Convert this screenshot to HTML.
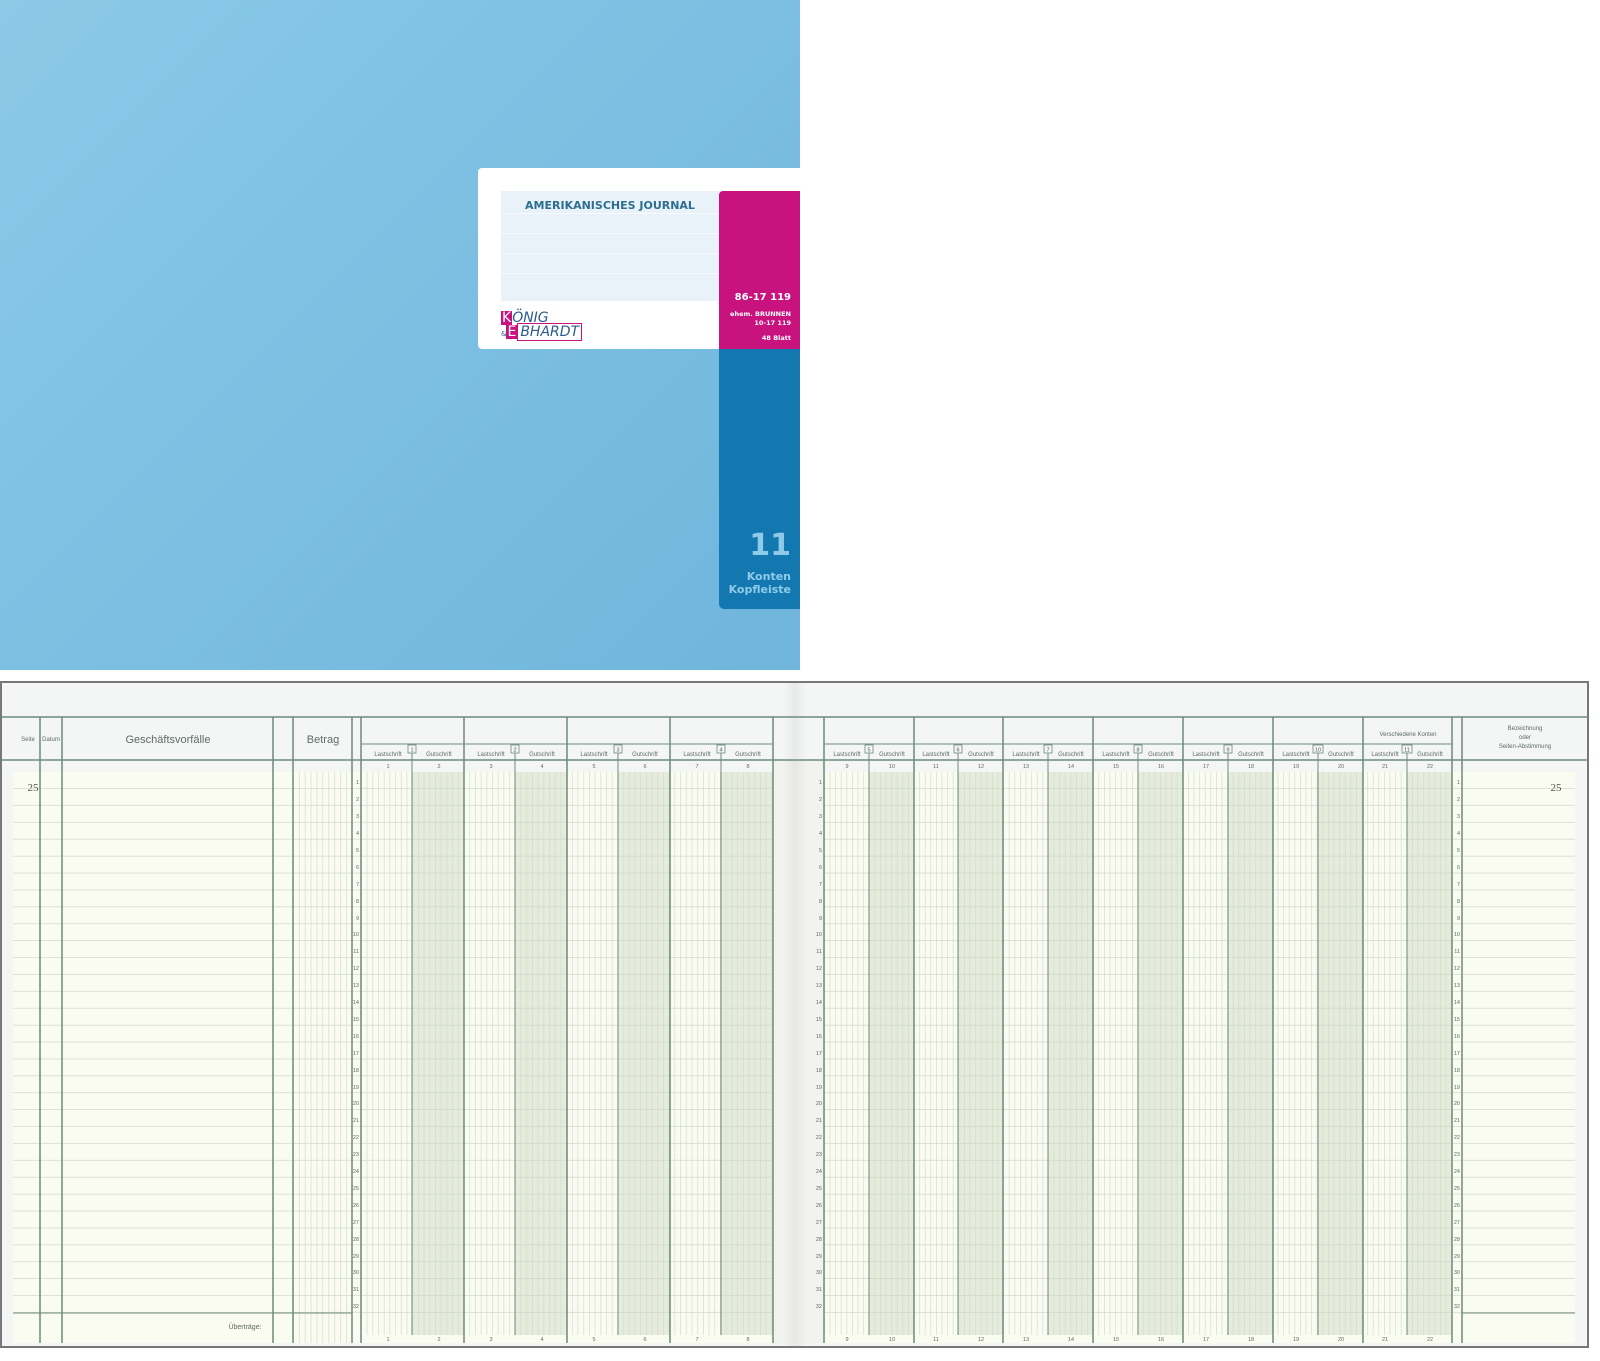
<!DOCTYPE html>
<html><head><meta charset="utf-8"><style>
html,body{margin:0;padding:0;background:#fff;width:1600px;height:1361px;overflow:hidden;position:relative;font-family:"Liberation Sans",sans-serif}
.cover{position:absolute;left:0;top:0;width:800px;height:670px;background:linear-gradient(135deg,#8cc9e7 0%,#7cbfe2 50%,#6fb5dc 100%)}
.lab{position:absolute;left:478px;top:168px;width:322px;height:181px;background:#fff;border-radius:4px 0 0 4px}
.lines{position:absolute;left:501px;top:191px;width:218px;height:110px;background:#e9f1f9}
.lines div{position:absolute;left:0;width:100%;height:1px;background:#f7fafd}
.title{position:absolute;left:501px;top:199px;width:218px;text-align:center;font:bold 11px "DejaVu Sans",sans-serif;color:#2c6f8f;letter-spacing:0}
.pink{position:absolute;left:719px;top:191px;width:81px;height:158px;background:#c8137f;border-radius:4px 0 0 0;color:#fff;text-align:right;font-family:"DejaVu Sans",sans-serif;font-weight:bold}
.dblue{position:absolute;left:719px;top:349px;width:81px;height:260px;background:#1378b0;border-radius:0 0 0 5px;color:#8fcbe9;text-align:right;font-family:"DejaVu Sans",sans-serif;font-weight:bold}
.logo{position:absolute;left:501px;top:311px;font:italic 14px "DejaVu Sans",sans-serif;color:#2c5c8f;line-height:14px}
.logo b{display:inline-block;background:#c8137f;color:#fff;font-style:normal;padding:0 1px;font-weight:normal}
</style></head><body>
<div class="cover"></div>
<div class="lab"></div>
<div class="lines"><div style="top:22px"></div><div style="top:42px"></div><div style="top:62px"></div><div style="top:82px"></div></div>
<div class="title">AMERIKANISCHES JOURNAL</div>
<div class="logo"><b>K</b>ÖNIG<br><span style="font-size:7px;font-style:normal">&amp;</span><b>E</b><span style="border:1px solid #c8137f;padding:0 2px">BHARDT</span></div>
<div class="pink">
<div style="position:absolute;right:9px;top:101px;font-size:10px">86-17 119</div>
<div style="position:absolute;right:9px;top:119px;font-size:6.5px;line-height:9px">ehem. BRUNNEN<br>10-17 119</div>
<div style="position:absolute;right:9px;top:143px;font-size:6.5px">48 Blatt</div>
</div>
<div class="dblue">
<div style="position:absolute;right:9px;top:182px;font-size:30px;line-height:30px">11</div>
<div style="position:absolute;right:9px;top:221px;font-size:11px;line-height:13px">Konten<br>Kopfleiste</div>
</div>

<svg width="1600" height="1361" style="position:absolute;left:0;top:0" xmlns="http://www.w3.org/2000/svg" font-family="Liberation Sans, sans-serif">
<defs>
<pattern id="rows" x="0" y="772" width="10" height="16.9" patternUnits="userSpaceOnUse"><rect x="0" y="16.2" width="10" height="0.9" fill="#cdd6cc"/></pattern>
<pattern id="vl" x="361" y="0" width="5.7" height="10" patternUnits="userSpaceOnUse"><rect x="0" y="0" width="0.7" height="10" fill="#d3dbd0"/></pattern>
<pattern id="vr" x="824" y="0" width="5.6" height="10" patternUnits="userSpaceOnUse"><rect x="0" y="0" width="0.7" height="10" fill="#d3dbd0"/></pattern>
<pattern id="vb" x="293" y="0" width="5.9" height="10" patternUnits="userSpaceOnUse"><rect x="0" y="0" width="0.7" height="10" fill="#d3dbd0"/></pattern>
<linearGradient id="fold" x1="0" x2="1"><stop offset="0" stop-color="#000" stop-opacity="0"/><stop offset=".5" stop-color="#000" stop-opacity=".05"/><stop offset="1" stop-color="#000" stop-opacity="0"/></linearGradient>
</defs>
<rect x="1" y="682" width="1587" height="665" fill="#f4f6f5"/>
<rect x="13" y="772" width="1562" height="571" fill="#fbfcf1"/>
<g fill="#e5ecdb">
<rect x="412" y="772" width="52" height="563"/><rect x="515" y="772" width="52" height="563"/><rect x="618" y="772" width="52" height="563"/><rect x="721" y="772" width="52" height="563"/>
<rect x="869" y="772" width="45" height="563"/><rect x="958" y="772" width="45" height="563"/><rect x="1048" y="772" width="45" height="563"/><rect x="1138" y="772" width="45" height="563"/><rect x="1228" y="772" width="45" height="563"/><rect x="1318" y="772" width="45" height="563"/><rect x="1407" y="772" width="45" height="563"/>
</g>
<rect x="293" y="772" width="59" height="571" fill="url(#vb)"/>
<rect x="361" y="772" width="412" height="563" fill="url(#vl)"/>
<rect x="824" y="772" width="628" height="563" fill="url(#vr)"/>
<rect x="773" y="760" width="51" height="583" fill="#f2f3ee"/>
<rect x="783" y="682" width="24" height="665" fill="url(#fold)"/>
<rect x="13" y="772" width="760" height="541" fill="url(#rows)"/>
<rect x="824" y="772" width="751" height="541" fill="url(#rows)"/>
<g stroke="#6e8a7c" fill="none">
<rect x="1" y="682" width="1587" height="665" stroke="#777" stroke-width="2"/>
<line x1="1" y1="717" x2="1588" y2="717" stroke-width="1.5"/>
<line x1="1" y1="760" x2="1588" y2="760" stroke-width="1.5"/>
<line x1="361" y1="744" x2="773" y2="744"/>
<line x1="824" y1="744" x2="1452" y2="744"/>
<g stroke-width="1.5">
<line x1="40" y1="717" x2="40" y2="1343"/><line x1="62" y1="717" x2="62" y2="1343"/>
<line x1="273" y1="717" x2="273" y2="1343"/><line x1="293" y1="717" x2="293" y2="1343"/>
<line x1="352" y1="717" x2="352" y2="1343"/><line x1="361" y1="717" x2="361" y2="1343"/>
<line x1="464" y1="717" x2="464" y2="1343"/><line x1="567" y1="717" x2="567" y2="1343"/><line x1="670" y1="717" x2="670" y2="1343"/><line x1="773" y1="717" x2="773" y2="1343"/>
<line x1="824" y1="717" x2="824" y2="1343"/><line x1="914" y1="717" x2="914" y2="1343"/><line x1="1003" y1="717" x2="1003" y2="1343"/><line x1="1093" y1="717" x2="1093" y2="1343"/><line x1="1183" y1="717" x2="1183" y2="1343"/><line x1="1273" y1="717" x2="1273" y2="1343"/><line x1="1363" y1="717" x2="1363" y2="1343"/><line x1="1452" y1="717" x2="1452" y2="1343"/><line x1="1462" y1="717" x2="1462" y2="1343"/>
</g>
<g stroke-width="1">
<line x1="412" y1="753" x2="412" y2="1335"/><line x1="515" y1="753" x2="515" y2="1335"/><line x1="618" y1="753" x2="618" y2="1335"/><line x1="721" y1="753" x2="721" y2="1335"/>
<line x1="869" y1="753" x2="869" y2="1335"/><line x1="958" y1="753" x2="958" y2="1335"/><line x1="1048" y1="753" x2="1048" y2="1335"/><line x1="1138" y1="753" x2="1138" y2="1335"/><line x1="1228" y1="753" x2="1228" y2="1335"/><line x1="1318" y1="753" x2="1318" y2="1335"/><line x1="1407" y1="753" x2="1407" y2="1335"/>
</g>
<line x1="13" y1="1313" x2="352" y2="1313"/>
<line x1="1462" y1="1313" x2="1575" y2="1313"/>
</g>
<g stroke="#6e8a7c" fill="#f4f6f5" stroke-width="0.8">
<rect x="408" y="745" width="8" height="8"/><rect x="511" y="745" width="8" height="8"/><rect x="614" y="745" width="8" height="8"/><rect x="717" y="745" width="8" height="8"/>
<rect x="865" y="745" width="8" height="8"/><rect x="954" y="745" width="8" height="8"/><rect x="1044" y="745" width="8" height="8"/><rect x="1134" y="745" width="8" height="8"/><rect x="1224" y="745" width="8" height="8"/><rect x="1313" y="745" width="10" height="8"/><rect x="1402" y="745" width="10" height="8"/>
</g>
<g font-size="5.5" fill="#556" text-anchor="middle">
<text x="412" y="751.5">1</text><text x="515" y="751.5">2</text><text x="618" y="751.5">3</text><text x="721" y="751.5">4</text>
<text x="869" y="751.5">5</text><text x="958" y="751.5">6</text><text x="1048" y="751.5">7</text><text x="1138" y="751.5">8</text><text x="1228" y="751.5">9</text><text x="1318" y="751.5">10</text><text x="1407" y="751.5">11</text>
</g>
<g fill="#5d6b66">
<text x="28" y="741" font-size="6" text-anchor="middle">Seite</text>
<text x="51" y="741" font-size="6" text-anchor="middle">Datum</text>
<text x="168" y="743" font-size="11" text-anchor="middle">Geschäftsvorfälle</text>
<text x="323" y="743" font-size="11" text-anchor="middle">Betrag</text>
<text x="1408" y="736" font-size="6" text-anchor="middle">Verschiedene Konten</text>
<text x="1525" y="730" font-size="6" text-anchor="middle">Bezeichnung</text>
<text x="1525" y="739" font-size="6" text-anchor="middle">oder</text>
<text x="1525" y="748" font-size="6" text-anchor="middle">Seiten-Abstimmung</text>
<text x="245" y="1329" font-size="7" text-anchor="middle">Überträge:</text>
</g>
<g fill="#5d6b66" font-size="6" text-anchor="middle">
<text x="388" y="756">Lastschrift</text><text x="439" y="756">Gutschrift</text>
<text x="491" y="756">Lastschrift</text><text x="542" y="756">Gutschrift</text>
<text x="594" y="756">Lastschrift</text><text x="645" y="756">Gutschrift</text>
<text x="697" y="756">Lastschrift</text><text x="748" y="756">Gutschrift</text>
<text x="847" y="756">Lastschrift</text><text x="892" y="756">Gutschrift</text>
<text x="936" y="756">Lastschrift</text><text x="981" y="756">Gutschrift</text>
<text x="1026" y="756">Lastschrift</text><text x="1071" y="756">Gutschrift</text>
<text x="1116" y="756">Lastschrift</text><text x="1161" y="756">Gutschrift</text>
<text x="1206" y="756">Lastschrift</text><text x="1251" y="756">Gutschrift</text>
<text x="1296" y="756">Lastschrift</text><text x="1341" y="756">Gutschrift</text>
<text x="1385" y="756">Lastschrift</text><text x="1430" y="756">Gutschrift</text>
</g>
<g fill="#5d6b66" font-size="5.5" text-anchor="middle">
<text x="388" y="768">1</text><text x="439" y="768">2</text><text x="491" y="768">3</text><text x="542" y="768">4</text><text x="594" y="768">5</text><text x="645" y="768">6</text><text x="697" y="768">7</text><text x="748" y="768">8</text>
<text x="847" y="768">9</text><text x="892" y="768">10</text><text x="936" y="768">11</text><text x="981" y="768">12</text><text x="1026" y="768">13</text><text x="1071" y="768">14</text><text x="1116" y="768">15</text><text x="1161" y="768">16</text><text x="1206" y="768">17</text><text x="1251" y="768">18</text><text x="1296" y="768">19</text><text x="1341" y="768">20</text><text x="1385" y="768">21</text><text x="1430" y="768">22</text>
</g>
<g fill="#5d6b66" font-size="5.5" text-anchor="middle">
<text x="388" y="1341">1</text><text x="439" y="1341">2</text><text x="491" y="1341">3</text><text x="542" y="1341">4</text><text x="594" y="1341">5</text><text x="645" y="1341">6</text><text x="697" y="1341">7</text><text x="748" y="1341">8</text>
<text x="847" y="1341">9</text><text x="892" y="1341">10</text><text x="936" y="1341">11</text><text x="981" y="1341">12</text><text x="1026" y="1341">13</text><text x="1071" y="1341">14</text><text x="1116" y="1341">15</text><text x="1161" y="1341">16</text><text x="1206" y="1341">17</text><text x="1251" y="1341">18</text><text x="1296" y="1341">19</text><text x="1341" y="1341">20</text><text x="1385" y="1341">21</text><text x="1430" y="1341">22</text>
</g>
<text x="33" y="791" font-family="Liberation Serif, serif" font-size="11" fill="#555" text-anchor="middle">25</text>
<text x="1556" y="791" font-family="Liberation Serif, serif" font-size="11" fill="#555" text-anchor="middle">25</text>
<g fill="#5d6b66" font-size="5.5" text-anchor="end" transform="translate(359,0)">
<text y="784">1</text><text y="801">2</text><text y="818">3</text><text y="835">4</text><text y="852">5</text><text y="869">6</text><text y="886">7</text><text y="903">8</text><text y="920">9</text><text y="936">10</text><text y="953">11</text><text y="970">12</text><text y="987">13</text><text y="1004">14</text><text y="1021">15</text><text y="1038">16</text><text y="1055">17</text><text y="1072">18</text><text y="1089">19</text><text y="1105">20</text><text y="1122">21</text><text y="1139">22</text><text y="1156">23</text><text y="1173">24</text><text y="1190">25</text><text y="1207">26</text><text y="1224">27</text><text y="1241">28</text><text y="1258">29</text><text y="1274">30</text><text y="1291">31</text><text y="1308">32</text>
</g>
<g fill="#5d6b66" font-size="5.5" text-anchor="end" transform="translate(822,0)">
<text y="784">1</text><text y="801">2</text><text y="818">3</text><text y="835">4</text><text y="852">5</text><text y="869">6</text><text y="886">7</text><text y="903">8</text><text y="920">9</text><text y="936">10</text><text y="953">11</text><text y="970">12</text><text y="987">13</text><text y="1004">14</text><text y="1021">15</text><text y="1038">16</text><text y="1055">17</text><text y="1072">18</text><text y="1089">19</text><text y="1105">20</text><text y="1122">21</text><text y="1139">22</text><text y="1156">23</text><text y="1173">24</text><text y="1190">25</text><text y="1207">26</text><text y="1224">27</text><text y="1241">28</text><text y="1258">29</text><text y="1274">30</text><text y="1291">31</text><text y="1308">32</text>
</g>
<g fill="#5d6b66" font-size="5.5" text-anchor="end" transform="translate(1460,0)">
<text y="784">1</text><text y="801">2</text><text y="818">3</text><text y="835">4</text><text y="852">5</text><text y="869">6</text><text y="886">7</text><text y="903">8</text><text y="920">9</text><text y="936">10</text><text y="953">11</text><text y="970">12</text><text y="987">13</text><text y="1004">14</text><text y="1021">15</text><text y="1038">16</text><text y="1055">17</text><text y="1072">18</text><text y="1089">19</text><text y="1105">20</text><text y="1122">21</text><text y="1139">22</text><text y="1156">23</text><text y="1173">24</text><text y="1190">25</text><text y="1207">26</text><text y="1224">27</text><text y="1241">28</text><text y="1258">29</text><text y="1274">30</text><text y="1291">31</text><text y="1308">32</text>
</g>
</svg>
</body></html>
